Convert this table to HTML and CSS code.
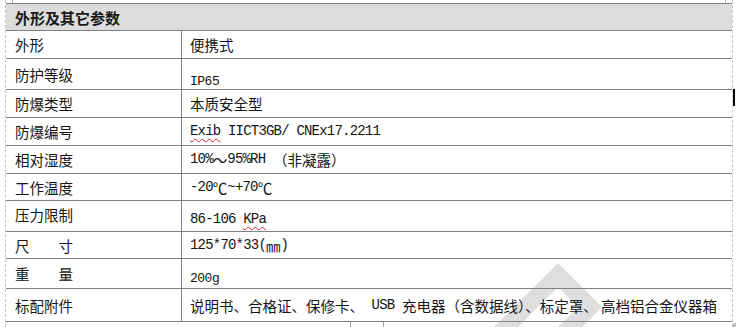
FILE: index.html
```html
<!DOCTYPE html>
<html lang="zh-CN">
<head>
<meta charset="utf-8">
<title>外形及其它参数</title>
<link rel="stylesheet" href="styles.css">
</head>
<body>
<div class="page">
  <svg class="watermark" width="737" height="327" viewBox="0 0 737 327" aria-hidden="true">
    <polyline points="488,345 558,275 590,307 552,345" fill="none" stroke="#dedede" stroke-width="17" stroke-linejoin="miter"/>
  </svg>
  <div class="sheet">
    <div class="table">
      <div class="row head h27"><div class="cell title">外形及其它参数</div></div>
      <div class="row h28"><div class="cell label">外形</div><div class="cell value">便携式</div></div>
      <div class="row h31"><div class="cell label">防护等级</div><div class="cell value low14"><span class="lat small">IP65</span></div></div>
      <div class="row h28"><div class="cell label">防爆类型</div><div class="cell value">本质安全型</div></div>
      <div class="row h28"><div class="cell label">防爆编号</div><div class="cell value"><span class="lat"><span class="spell">Exib</span> IICT3GB/ CNEx17.2211</span></div></div>
      <div class="row h28"><div class="cell label">相对湿度</div><div class="cell value"><span class="lat">10%</span>～<span class="lat">95%RH </span>（非凝露）</div></div>
      <div class="row h27"><div class="cell label">工作温度</div><div class="cell value"><span class="lat">-20</span>℃<span class="lat">~+70</span>℃</div></div>
      <div class="row h31"><div class="cell label up3">压力限制</div><div class="cell value low7"><span class="lat">86-106 <span class="spell">KPa</span></span></div></div>
      <div class="row h27"><div class="cell label">尺　　寸</div><div class="cell value"><span class="lat">125*70*33(</span>㎜<span class="lat">)</span></div></div>
      <div class="row h30"><div class="cell label">重　　量</div><div class="cell value low9"><span class="lat small">200g</span></div></div>
      <div class="row h33"><div class="cell label">标配附件</div><div class="cell value">说明书、合格证、保修卡、<span class="lat"> USB </span>充电器（含数据线）、标定罩、 高档铝合金仪器箱</div></div>
    </div>
  </div>
  <span class="mark tick-tl"></span>
  <span class="mark tick-tr"></span>
  <span class="mark cursor"></span>
  <span class="mark tick-b1"></span>
  <span class="mark tick-b2"></span>
  <span class="mark tick-br"></span>
</div>
</body>
</html>
```

FILE: styles.css
```css
html, body {
  margin: 0;
  background: #ffffff;
}

.page {
  position: relative;
  width: 737px;
  height: 327px;
  overflow: hidden;
  font-family: "Noto Sans CJK SC", sans-serif;
  color: #151515;
}

.watermark {
  position: absolute;
  left: 0;
  top: 0;
  z-index: 0;
}

.sheet {
  position: relative;
  z-index: 1;
  margin-left: 5px;
  width: 728px;
  height: 327px;
  box-sizing: border-box;
  padding-top: 3px;
  border-left: 1px dashed #c4c4c4;
  border-right: 1px dashed #c4c4c4;
}

.table {
  border-top: 1px solid #808080;
}

.row {
  display: grid;
  grid-template-columns: 176px 1fr;
  box-sizing: border-box;
  border-bottom: 1px solid #808080;
}

.h27 { height: 27px; }
.h28 { height: 28px; }
.h30 { height: 30px; }
.h31 { height: 31px; }
.h33 { height: 33px; }

.head {
  grid-template-columns: 1fr;
  background: #dcdcdc;
}

.cell {
  display: flex;
  align-items: center;
  box-sizing: border-box;
  line-height: 15px;
  white-space: nowrap;
}

.title {
  padding-left: 9px;
  font-size: 15px;
  font-weight: 700;
  color: #1a1a1a;
}

.label {
  padding-left: 9px;
  font-size: 14.5px;
  border-right: 1px solid #808080;
}

.value {
  padding-left: 8px;
  font-size: 14.5px;
  white-space: pre;
}

.lat {
  font-family: "Liberation Mono", monospace;
  font-size: 14px;
  letter-spacing: -0.8px;
  white-space: pre;
}

.lat.small {
  font-size: 13px;
  letter-spacing: -0.5px;
}

.spell {
  text-decoration: underline wavy #e02020;
  text-decoration-thickness: 1px;
  text-underline-offset: 3px;
}

.low14 { padding-top: 14px; }
.low9 { padding-top: 9px; }
.low7 { padding-top: 7px; }
.up3 { padding-bottom: 3px; }

.mark {
  position: absolute;
  z-index: 2;
  display: block;
}

.tick-tl { left: 12px; top: 0; width: 1px; height: 3px; background: #b0b0b0; }
.tick-tr { left: 725px; top: 0; width: 1px; height: 3px; background: #b0b0b0; }
.cursor { left: 733px; top: 89px; width: 2px; height: 17px; background: #000000; }
.tick-b1 { left: 350px; top: 322px; width: 1px; height: 5px; background: #a0a0a0; }
.tick-b2 { left: 383px; top: 322px; width: 1px; height: 5px; background: #a0a0a0; }
.tick-br { left: 733px; top: 323px; width: 3px; height: 4px; background: #c0c0c0; }
```
